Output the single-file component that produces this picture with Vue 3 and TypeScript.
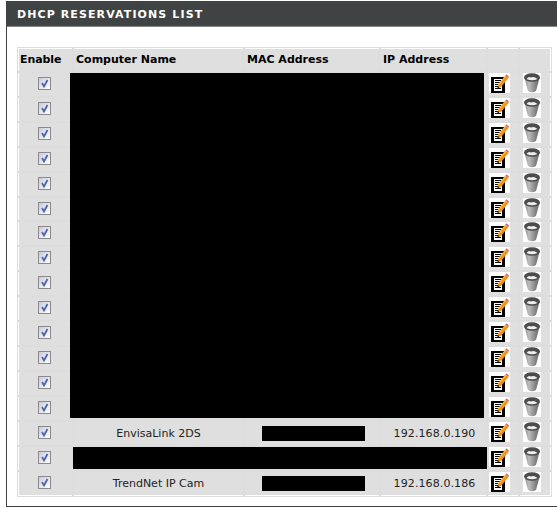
<script setup lang="ts">
interface Row {
  name: string
  mac: boolean
  ip: string
}

const hidden: Row = { name: '', mac: false, ip: '' }

const rows: Row[] = [
  ...Array.from({ length: 14 }, () => hidden),
  { name: 'EnvisaLink 2DS', mac: true, ip: '192.168.0.190' },
  hidden,
  { name: 'TrendNet IP Cam', mac: true, ip: '192.168.0.186' },
]
</script>

<template>
  <div class="page">
    <div class="panel">
      <h2 class="title">DHCP RESERVATIONS LIST</h2>
      <div class="body">
        <div class="table-wrap">
          <table class="list">
            <thead>
              <tr>
                <th class="c-enable">Enable</th>
                <th class="c-name">Computer Name</th>
                <th class="c-mac">MAC Address</th>
                <th class="c-ip">IP Address</th>
                <th class="c-edit"></th>
                <th class="c-del"></th>
              </tr>
            </thead>
            <tbody>
              <tr v-for="(row, i) in rows" :key="i" :class="{ short: i === 5 }">
                <td class="check-cell">
                  <span class="check">
                    <svg viewBox="0 0 11 11" width="11" height="11">
                      <path d="M3 5 L5 8.500 L8.500 2" fill="none" stroke="#4a62ad" stroke-width="1.700" />
                    </svg>
                  </span>
                </td>
                <td>{{ row.name }}</td>
                <td><span v-if="row.mac" class="mac-mask"></span></td>
                <td class="ip-cell">{{ row.ip }}</td>
                <td class="icon-cell">
                  <span class="icon-box edit">
                    <svg viewBox="0 0 21 21" width="21" height="21" shape-rendering="crispEdges">
                      <rect x="2" y="5" width="14" height="16" fill="#000" />
                      <rect x="5" y="7" width="8" height="12" fill="#fff" />
                      <path d="M6 8.500h6M6 10.500h5M6 12.500h4M6 14.500h3M6 16.500h6" stroke="#000" stroke-width="1" />
                      <g shape-rendering="auto">
                        <path d="M8.500 16 L9 12.500 L16.500 3.500 L19.500 6 L12 15 Z" fill="#f0931a" />
                        <path d="M9 12.500 L16.500 3.500 L17.500 4.300 L10 13.300 Z" fill="#f9b440" />
                        <path d="M16.500 3.500 L17.500 2.300 L20 4.500 L19.500 6 Z" fill="#c96f78" />
                        <path d="M8.500 16 L8.800 14 L10.500 15.500 Z" fill="#000" />
                      </g>
                    </svg>
                  </span>
                </td>
                <td class="icon-cell">
                  <span class="icon-box del">
                    <svg viewBox="0 0 18 21" width="18" height="21">
                      <defs>
                        <linearGradient :id="`bin-${i}`" x1="0" x2="1" y1="0" y2="0">
                          <stop offset="0" stop-color="#8e8e8e" />
                          <stop offset=".3" stop-color="#bcbcbc" />
                          <stop offset=".7" stop-color="#868686" />
                          <stop offset="1" stop-color="#666" />
                        </linearGradient>
                      </defs>
                      <path d="M1.500 6 L5 19 Q9 21.500 13 19 L16.500 6 Z" :fill="`url(#bin-${i})`" />
                      <ellipse cx="9" cy="5.500" rx="8" ry="4.200" fill="#4c4c4c" />
                      <path d="M3.500 7 Q5.500 4 8 5.500 Q11 4 14.500 7 Q9 9.500 3.500 7 Z" fill="#ededed" />
                    </svg>
                  </span>
                </td>
              </tr>
            </tbody>
          </table>
          <div class="mask mask-big"></div>
          <div class="mask mask-row"></div>
        </div>
      </div>
    </div>
  </div>
</template>

<style>
html,
body {
  background: #fff;
}
</style>

<style scoped>
.page {
  width: 557px;
  height: 509px;
  overflow: hidden;
  padding: 1px 0 0 6px;
  box-sizing: border-box;
  font-family: "DejaVu Sans", sans-serif;
  font-size: 11px;
  color: #222;
}

.panel {
  width: 560px;
  height: 506px;
  box-sizing: border-box;
  border-left: 1px solid #404343;
  border-bottom: 1px solid #404343;
}

.title {
  margin: 0;
  height: 26px;
  line-height: 28px;
  padding-left: 10px;
  background: #404343;
  border-bottom: 1px solid #888;
  box-sizing: border-box;
  color: #fff;
  font-size: 11px;
  font-weight: bold;
  letter-spacing: 1.1px;
}

.body {
  padding: 20px 0 0 10px;
}

.table-wrap {
  position: relative;
  width: 534px;
}

.list {
  border-collapse: separate;
  border-spacing: 0;
  table-layout: fixed;
  width: 534px;
  background: #fff;
  border-top: 1px solid #ddd;
  border-left: 1px solid #ddd;
}

.list th,
.list td {
  height: 25px;
  padding: 0;
  background: #dfdfdf;
  border: 1px solid #fff;
  outline: 1px solid #ddd;
  box-sizing: border-box;
  font-weight: normal;
  text-align: center;
  vertical-align: middle;
}

.list th {
  height: 24px;
  text-align: left;
  padding: 0 0 2px 2px;
  font-weight: bold;
  color: #000;
}

.list th.c-enable {
  padding-left: 1px;
  letter-spacing: -0.1px;
}

.list .short td {
  height: 24px;
}

.c-enable { width: 55px; }
.c-name { width: 171px; }
.c-mac { width: 136px; }
.c-ip { width: 107px; }
.c-edit { width: 32px; }
.c-del { width: 32px; }

.list .check-cell {
  padding: 0 3px 2px 0;
}

.list .ip-cell {
  letter-spacing: 0.1px;
  padding-left: 2px;
}

.check {
  display: inline-block;
  width: 11px;
  height: 11px;
  border: 1px solid #8a8a8a;
  background: linear-gradient(135deg, #c9cbdc, #fff);
  vertical-align: middle;
}

.check svg {
  display: block;
}

.list .icon-cell {
  text-align: left;
}

.icon-box {
  display: block;
  background: #fff;
  height: 21px;
  margin-top: -2px;
  margin-bottom: 2px;
}

.icon-box svg {
  display: block;
}

.edit {
  width: 21px;
  margin-left: 1px;
}

.del {
  width: 18px;
  margin-left: 3px;
}

.mac-mask {
  display: inline-block;
  width: 103px;
  height: 15px;
  margin-left: 3px;
  background: #000;
  vertical-align: middle;
}

.mask {
  position: absolute;
  background: #000;
}

.mask-big {
  left: 53px;
  top: 26px;
  width: 414px;
  height: 345px;
}

.mask-row {
  left: 56px;
  top: 400px;
  width: 414px;
  height: 22px;
}
</style>
